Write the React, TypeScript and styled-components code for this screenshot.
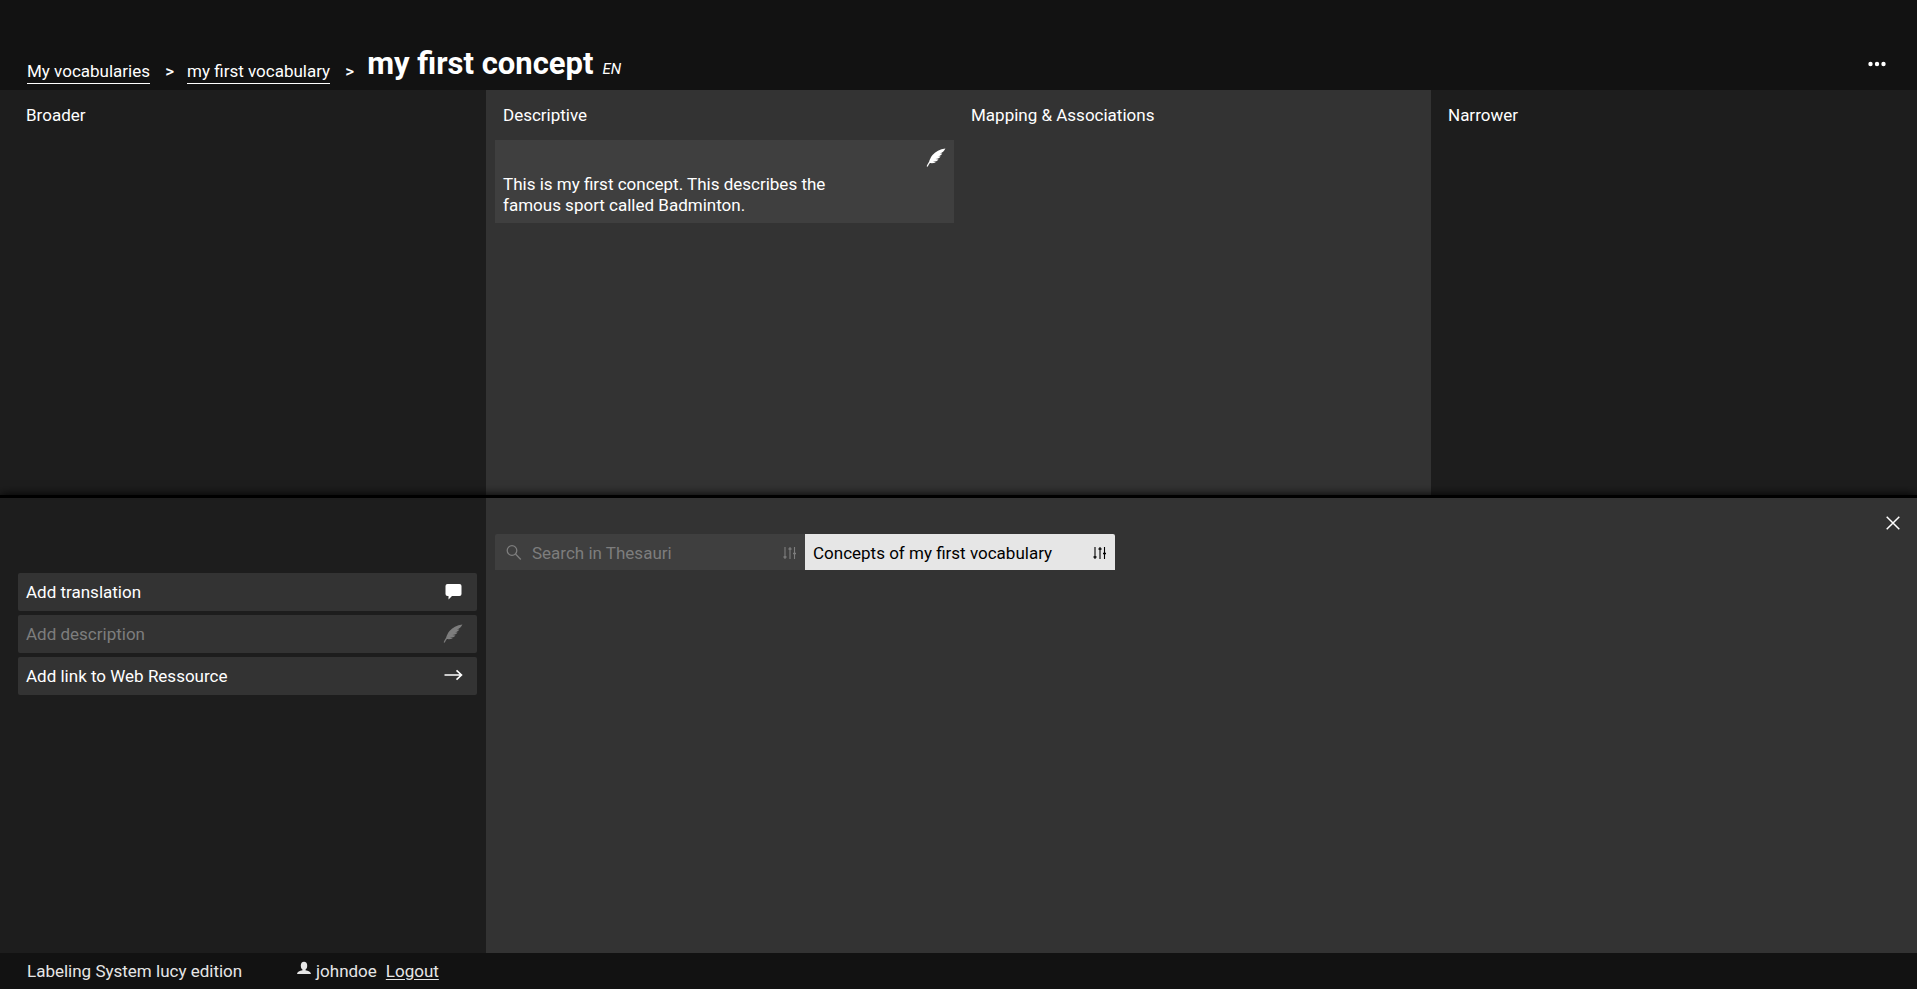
import React from 'react';
import styled, { createGlobalStyle, css } from 'styled-components';

const sideWidth = 'calc((100% - 81px) / 4 + 27px)';

const GlobalStyle = createGlobalStyle`
  *, *::before, *::after { box-sizing: border-box; }
  html, body, #root { height: 100%; }
  body {
    margin: 0;
    background: #121212;
    color: #fff;
    font: 400 17px/21px Roboto, "Open Sans", sans-serif;
  }
  button, input { font: inherit; color: inherit; }
  svg { display: block; flex: none; }
`;

const Page = styled.div`
  display: flex;
  flex-direction: column;
  min-height: 100%;
`;

const Header = styled.header`
  display: flex;
  justify-content: space-between;
  align-items: flex-end;
  height: 90px;
  padding: 0 27px 6px;
`;

const Breadcrumb = styled.nav`
  display: flex;
  align-items: flex-end;
`;

const Crumb = styled.a`
  color: inherit;
  text-decoration: none;
  border-bottom: 1px solid #fff;
  line-height: 23px;
`;

const Separator = styled.span`
  display: flex;
  justify-content: center;
  width: 37px;
  padding-left: 2px;
  line-height: 25px;
  font-weight: 500;
`;

const TitleGroup = styled.div`
  display: flex;
  align-items: baseline;
  margin-bottom: 2px;
`;

const Title = styled.h1`
  margin: 0;
  font-size: 31px;
  line-height: 36px;
  font-weight: 700;
`;

const Language = styled.em`
  margin-left: 9px;
  font-size: 15px;
`;

const IconButton = styled.button`
  display: flex;
  padding: 0;
  border: 0;
  background: none;
  cursor: pointer;
`;

const MenuButton = styled(IconButton)`
  padding: 8px 4px;
  margin-bottom: 9px;
`;

const Board = styled.main`
  display: flex;
  flex: 405 0 0;
  min-height: 240px;
`;

const Side = styled.section`
  flex: none;
  width: ${sideWidth};
  background: #1d1d1d;
`;

const Outer = styled(Side)<{ $end?: boolean }>`
  padding: ${p => (p.$end ? '0 18px 0 9px' : '0 9px 0 18px')};
`;

const Middle = styled.div`
  display: grid;
  grid-template-columns: 1fr 1fr;
  column-gap: 9px;
  flex: 1;
  padding: 0 9px;
  background: #333;
`;

const ColumnTitle = styled.h2`
  margin: 0;
  padding: 15px 8px 14px;
  font-size: 17px;
  line-height: 21px;
  font-weight: 400;
`;

const Card = styled.article`
  position: relative;
  padding: 34px 100px 7px 8px;
  background: #3f3f3f;

  p { margin: 0; }
  svg { position: absolute; top: 8px; right: 8px; }
`;

const Drawer = styled.section`
  position: relative;
  display: flex;
  flex: 455 0 0;
  min-height: 260px;
  border-top: 3px solid #000;
  box-shadow: 0 0 10px #000;
`;

const Actions = styled(Side)`
  display: flex;
  flex-direction: column;
  gap: 4px;
  padding: 75px 9px 18px 18px;
`;

const ActionButton = styled.button`
  display: flex;
  justify-content: space-between;
  align-items: center;
  height: 38px;
  padding: 0 14px 0 8px;
  border: 0;
  border-radius: 2px;
  background: #333;
  cursor: pointer;

  &:disabled { color: #7d7d7d; cursor: default; }
`;

const Finder = styled.div`
  display: flex;
  justify-content: space-between;
  align-items: flex-start;
  flex: 1;
  padding: 0 13px 0 9px;
  background: #333;
`;

const Tabs = styled.div`
  display: grid;
  grid-template-columns: 1fr 1fr;
  width: 620px;
  margin-top: 36px;
`;

const tab = css`
  display: flex;
  align-items: center;
  height: 36px;
  padding: 2px 8px 0;
`;

const SearchTab = styled.label`
  ${tab}
  gap: 10px;
  padding-left: 10px;
  border-radius: 2px 0 0 0;
  background: #3f3f3f;
  color: #7d7d7d;

  input {
    flex: 1;
    min-width: 0;
    padding: 0;
    border: 0;
    outline: 0;
    background: none;
  }
  input::placeholder { color: inherit; opacity: 1; }
`;

const ConceptTab = styled.button`
  ${tab}
  justify-content: space-between;
  border: 0;
  border-radius: 0 2px 0 0;
  background: #e6e6e6;
  color: #000;
  cursor: pointer;
`;

const CloseButton = styled(IconButton)`
  padding: 4px;
  margin-top: 14px;
`;

const Footer = styled.footer`
  position: relative;
  display: flex;
  height: 36px;
  padding: 8px 27px;
  background: #121212;
  color: #e6e6e6;
`;

const Product = styled.span`
  width: 270px;
`;

const User = styled.span`
  display: flex;
  gap: 5px;
  margin-right: 9px;
`;

const Logout = styled.a`
  color: inherit;
  text-underline-offset: 2px;
`;

const Feather = () => (
  <svg width="20" height="20" viewBox="0 0 20 20" fill="currentColor" aria-hidden="true">
    <path d="M19.400 .500C14 1.200 9.300 3.600 6.500 7C4.500 9.500 3.600 12 3.100 13.800C2.100 15.200 1.200 16.700 .600 18.300L1.700 18.700C2.300 17.300 3 16.200 3.900 15C5.900 15.300 8.200 15.100 9.900 14.200L6.900 13.600C9.400 13.700 11.200 12.900 12.500 11.400L9.500 11C12 11 13.600 10 14.600 8.500L12 8.300C14.200 8 15.500 7 16.300 5.500L14 5.400C16.300 4.900 18.200 3.200 19.400 .500Z" />
  </svg>
);

const Sliders = () => (
  <svg width="14" height="14" viewBox="0 0 14 14" fill="none" stroke="currentColor" aria-hidden="true">
    <path d="M2 1V13M7 1V13M11.500 1V13" strokeWidth="1.100" />
    <path d="M.500 11H3.500M5.500 3H8.500M10 7.500H13" strokeWidth="1.600" />
  </svg>
);

export default function App() {
  return (
    <Page>
      <GlobalStyle />
      <Header>
        <Breadcrumb aria-label="Breadcrumb">
          <Crumb href="#vocabularies">My vocabularies</Crumb>
          <Separator>&gt;</Separator>
          <Crumb href="#vocabulary">my first vocabulary</Crumb>
          <Separator>&gt;</Separator>
          <TitleGroup>
            <Title>my first concept</Title>
            <Language>EN</Language>
          </TitleGroup>
        </Breadcrumb>
        <MenuButton aria-label="More options">
          <svg width="18" height="6" viewBox="0 0 18 6" fill="currentColor">
            <circle cx="2.500" cy="3" r="2.200" />
            <circle cx="9" cy="3" r="2.200" />
            <circle cx="15.500" cy="3" r="2.200" />
          </svg>
        </MenuButton>
      </Header>

      <Board>
        <Outer><ColumnTitle>Broader</ColumnTitle></Outer>
        <Middle>
          <section>
            <ColumnTitle>Descriptive</ColumnTitle>
            <Card>
              <Feather />
              <p>This is my first concept. This describes the famous sport called Badminton.</p>
            </Card>
          </section>
          <section>
            <ColumnTitle>Mapping &amp; Associations</ColumnTitle>
          </section>
        </Middle>
        <Outer $end><ColumnTitle>Narrower</ColumnTitle></Outer>
      </Board>

      <Drawer>
        <Actions>
          <ActionButton>
            Add translation
            <svg width="20" height="20" viewBox="0 0 20 20" fill="currentColor" aria-hidden="true">
              <path d="M4.500 2H16.500Q18.500 2 18.500 4V12Q18.500 14 16.500 14H9L5.500 17.500V14H4.500Q2.500 14 2.500 12V4Q2.500 2 4.500 2Z" />
            </svg>
          </ActionButton>
          <ActionButton disabled>
            Add description
            <Feather />
          </ActionButton>
          <ActionButton>
            Add link to Web Ressource
            <svg width="20" height="20" viewBox="0 0 20 20" fill="none" stroke="currentColor" strokeWidth="1.600" aria-hidden="true">
              <path d="M1.500 9H18.500M13.500 4.300L18.500 9L13.500 13.700" />
            </svg>
          </ActionButton>
        </Actions>
        <Finder>
          <Tabs>
            <SearchTab>
              <svg width="17" height="17" viewBox="0 0 17 17" fill="none" stroke="currentColor" strokeWidth="1.300" aria-hidden="true">
                <circle cx="7" cy="5.500" r="4.800" />
                <path d="M10.500 9L15.800 14.500" />
              </svg>
              <input type="text" placeholder="Search in Thesauri" aria-label="Search in Thesauri" />
              <Sliders />
            </SearchTab>
            <ConceptTab>
              Concepts of my first vocabulary
              <Sliders />
            </ConceptTab>
          </Tabs>
          <CloseButton aria-label="Close">
            <svg width="14" height="14" viewBox="0 0 14 14" fill="none" stroke="currentColor" strokeWidth="1.500">
              <path d="M.700 .700L13.300 13.300M13.300 .700L.700 13.300" />
            </svg>
          </CloseButton>
        </Finder>
      </Drawer>

      <Footer>
        <Product>Labeling System lucy edition</Product>
        <User>
          <svg width="14" height="14" viewBox="0 0 14 14" fill="currentColor" aria-hidden="true">
            <ellipse cx="7" cy="4.700" rx="3.200" ry="4" />
            <path d="M5.500 8H8.500V9.200C11.500 9.700 13.700 10.500 14 13H0C.300 10.500 2.500 9.700 5.500 9.200Z" />
          </svg>
          johndoe
        </User>
        <Logout href="#logout">Logout</Logout>
      </Footer>
    </Page>
  );
}
